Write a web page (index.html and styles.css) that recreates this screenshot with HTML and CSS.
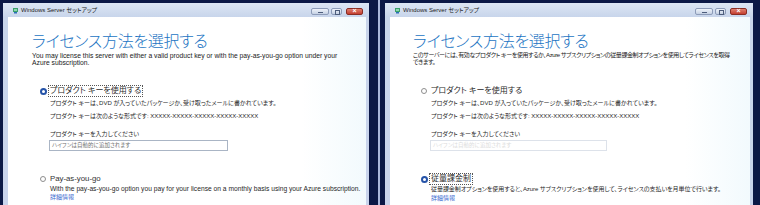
FILE: index.html
```html
<!DOCTYPE html>
<html lang="ja">
<head>
<meta charset="utf-8">
<title>Windows Server セットアップ</title>
<link rel="stylesheet" href="styles.css">
</head>
<body>
<div class="screens">
  <div class="shot shot-l">
    <div class="window">
      <div class="titlebar">
        <svg class="appicon" width="6" height="7" viewBox="0 0 6 7"><rect x="0" y="1" width="5" height="4" fill="#3aa06a"/><rect x="1" y="2" width="3" height="2" fill="#8fd6b0"/><rect x="1" y="5" width="3" height="1.5" fill="#2a6fb8"/></svg>
        <span class="title">Windows Server セットアップ</span>
        <div class="caption-btns">
          <span class="cb min"></span><span class="cb max"></span><span class="cb close"></span>
        </div>
      </div>
      <div class="content">
        <h1 class="heading">ライセンス方法を選択する</h1>
        <p class="desc en">You may license this server with either a valid product key or with the pay-as-you-go option under your<br>Azure subscription.</p>
        <div class="option first">
          <div class="opt-head"><span class="radio on"></span><span class="label focus">プロダクト キーを使用する</span></div>
          <div class="opt-body">
            <p class="sub">プロダクト キーは、DVD が入っていたパッケージか、受け取ったメールに書かれています。</p>
            <p class="sub fmt">プロダクト キーは次のような形式です: XXXXX-XXXXX-XXXXX-XXXXX-XXXXX</p>
            <p class="sub enter">プロダクト キーを入力してください</p>
            <div class="keybox"><span class="ph">ハイフンは自動的に追加されます</span></div>
          </div>
        </div>
        <div class="option second">
          <div class="opt-head"><span class="radio off"></span><span class="label en-label">Pay-as-you-go</span></div>
          <div class="opt-body">
            <p class="sub en-sub">With the pay-as-you-go option you pay for your license on a monthly basis using your Azure subscription.</p>
            <a class="link" href="#">詳細情報</a>
          </div>
        </div>
      </div>
    </div>
  </div>
  <div class="divider"></div>
  <div class="shot shot-r">
    <div class="window">
      <div class="titlebar">
        <svg class="appicon" width="6" height="7" viewBox="0 0 6 7"><rect x="0" y="1" width="5" height="4" fill="#3aa06a"/><rect x="1" y="2" width="3" height="2" fill="#8fd6b0"/><rect x="1" y="5" width="3" height="1.5" fill="#2a6fb8"/></svg>
        <span class="title">Windows Server セットアップ</span>
        <div class="caption-btns">
          <span class="cb min"></span><span class="cb max"></span><span class="cb close"></span>
        </div>
      </div>
      <div class="content">
        <h1 class="heading">ライセンス方法を選択する</h1>
        <p class="desc ja">このサーバーには、有効なプロダクト キーを使用するか、Azure サブスクリプションの従量課金制オプションを使用してライセンスを取得<br>できます。</p>
        <div class="option first">
          <div class="opt-head"><span class="radio off"></span><span class="label">プロダクト キーを使用する</span></div>
          <div class="opt-body">
            <p class="sub">プロダクト キーは、DVD が入っていたパッケージか、受け取ったメールに書かれています。</p>
            <p class="sub fmt">プロダクト キーは次のような形式です: XXXXX-XXXXX-XXXXX-XXXXX-XXXXX</p>
            <p class="sub enter">プロダクト キーを入力してください</p>
            <div class="keybox disabled"><span class="ph">ハイフンは自動的に追加されます</span></div>
          </div>
        </div>
        <div class="option second">
          <div class="opt-head"><span class="radio on"></span><span class="label focus">従量課金制</span></div>
          <div class="opt-body">
            <p class="sub ja-sub">従量課金制オプションを使用すると、Azure サブスクリプションを使用して、ライセンスの支払いを月単位で行います。</p>
            <a class="link" href="#">詳細情報</a>
          </div>
        </div>
      </div>
    </div>
  </div>
</div>
</body>
</html>
```
FILE: styles.css
```css
* { margin: 0; padding: 0; box-sizing: border-box; }

body {
  background: #0b1846;
  font-family: "Liberation Sans", "Noto Sans CJK JP", sans-serif;
  font-feature-settings: "palt" 1;
  color: #1f1f1f;
}

.screens {
  display: flex;
  width: 760px;
  height: 205px;
  overflow: hidden;
}

.shot {
  height: 205px;
  background: #0b1846;
  padding-top: 3px;
}
.shot-l { width: 378px; padding-left: 3px; }
.shot-r { width: 380px; padding-left: 5px; }
.divider { width: 2px; background: #a9b7db; }

.window {
  height: 202px;
  background: linear-gradient(#dce6f4, #c8d5eb 14px, #c9d4ec);
  display: flex;
  flex-direction: column;
}
.shot-l .window { width: 366px; }
.shot-r .window { width: 368px; }

.titlebar {
  height: 14px;
  display: flex;
  align-items: center;
  flex-shrink: 0;
}
.appicon { margin-left: 10px; flex-shrink: 0; }
.title {
  margin-left: 2px;
  font-size: 6px;
  line-height: 14px;
  color: #1b1b1b;
  white-space: nowrap;
}
.caption-btns {
  margin-left: auto;
  margin-right: 6px;
  align-self: flex-start;
  margin-top: 5px;
  display: flex;
  gap: 2px;
}
.cb {
  position: relative;
  display: block;
  height: 7px;
  border: 1px solid #8d9cb9;
  border-radius: 2px;
  background: linear-gradient(#eef3fa, #c5d1e4);
}
.cb.min { width: 18px; }
.cb.max { width: 11px; }
.cb.close { width: 17px; margin-left: 2px; background: linear-gradient(#e08070, #c43e2f); border-color: #8a2d24; }
.cb.min::after {
  content: "";
  position: absolute;
  left: 6px; top: 3px;
  width: 5px; height: 1px;
  background: #4d5d7c;
}
.cb.max::after {
  content: "";
  position: absolute;
  left: 3px; top: 1px;
  width: 3px; height: 3px;
  border: 1px solid #4d5d7c;
}
.cb.close::after {
  content: "×";
  position: absolute;
  left: 0; right: 0; top: -2px;
  text-align: center;
  font-size: 7px;
  line-height: 8px;
  color: #fff;
  font-weight: bold;
}

.content {
  flex: 1;
  margin: 0 3px 0 5px;
  background: linear-gradient(90deg, #ffffff 82%, #f2fafd);
  padding: 14px 0 0 24px;
}
.shot-r .content { padding-left: 23px; }

.heading {
  font-family: "Noto Sans CJK JP", sans-serif;
  font-weight: 300;
  font-size: 16px;
  line-height: 18px;
  letter-spacing: -0.3px;
  color: #1b74c3;
  white-space: nowrap;
}

.desc {
  margin-top: 3px;
  font-size: 6.75px;
  line-height: 7px;
  white-space: nowrap;
  color: #1a1a1a;
}
.desc.ja { font-size: 6px; letter-spacing: -0.4px; }

.option { padding-left: 8px; }
.option.first { margin-top: 19px; }
.option.second { margin-top: 22px; }

.opt-head {
  display: flex;
  align-items: center;
  height: 12px;
}
.radio {
  width: 7px;
  height: 7px;
  border-radius: 50%;
  flex-shrink: 0;
  margin-right: 1px;
}
.radio.on { border: 2px solid #2553a8; background: #fff; }
.radio.off { border: 1px solid #8e8e8e; background: #fff; width: 6px; height: 6px; margin-right: 2px; }

.label {
  font-size: 8px;
  line-height: 10px;
  border: 1px dotted transparent;
  padding: 0 1px;
  white-space: nowrap;
  color: #2a2a2a;
}
.label.focus { border-color: #555; }
.label.en-label { font-size: 7.8px; color: #333; }

.opt-body { margin-left: 10px; }
.sub {
  font-size: 6px;
  line-height: 8px;
  white-space: nowrap;
  color: #1f1f1f;
}
.first .sub:first-child { margin-top: 2px; }
.sub.fmt { margin-top: 5px; }
.sub.enter { margin-top: 10px; }
.sub.en-sub { font-size: 6.7px; }
.sub.ja-sub { letter-spacing: -0.05px; line-height: 9px; }

.keybox {
  margin-top: 2px;
  margin-left: -1px;
  width: 179px;
  height: 11px;
  border: 1px solid #aab5c5;
  background: #fff;
  padding-left: 2px;
  display: flex;
  align-items: center;
}
.ph { font-size: 5.5px; line-height: 9px; color: #6f6f6f; white-space: nowrap; }
.keybox.disabled { border-color: #dde2ea; width: 177px; }
.keybox.disabled .ph { color: #dcdcdc; }

.link {
  display: block;
  font-size: 6px;
  line-height: 8px;
  color: #3a6ad0;
  text-decoration: none;
}
```
